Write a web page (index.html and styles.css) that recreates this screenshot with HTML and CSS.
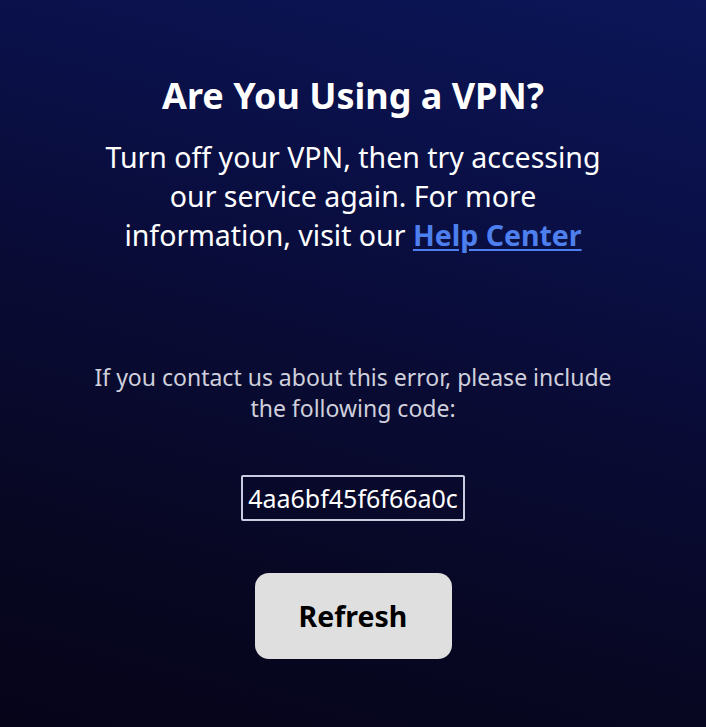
FILE: index.html
```html
<!DOCTYPE html>
<html lang="en">
<head>
<meta charset="utf-8">
<title>Are You Using a VPN?</title>
<link rel="stylesheet" href="styles.css">
</head>
<body>
<main class="page">
  <section class="notice">
    <h1 class="title">Are You Using a VPN?</h1>
    <p class="lead">Turn off your VPN, then try accessing our service again. For more information, visit our <a class="help" href="#">Help Center</a></p>
  </section>
  <section class="error">
    <p class="hint">If you contact us about this error, please include the following code:</p>
    <div class="code">4aa6bf45f6f66a0c</div>
    <button class="refresh" type="button">Refresh</button>
  </section>
</main>
</body>
</html>
```
FILE: styles.css
```css
html, body {
  margin: 0;
  padding: 0;
  height: 100%;
}
body {
  font-family: "Noto Sans", "Open Sans", sans-serif;
  color: #ffffff;
  background: linear-gradient(195deg, #0c1658 0%, #0a1048 25%, #090b34 50%, #070722 78%, #060419 100%);
  background-color: #060419;
}
.page {
  display: flex;
  flex-direction: column;
  align-items: center;
  padding-top: 71px;
  text-align: center;
}
.notice {
  width: 520px;
  display: flex;
  flex-direction: column;
  align-items: center;
}
.title {
  margin: 0;
  font-size: 36px;
  font-weight: 700;
  line-height: 50px;
}
.lead {
  margin: 17px 0 0;
  font-size: 28.5px;
  line-height: 39px;
}
.help {
  color: #4d7fee;
  font-weight: 700;
  text-decoration: underline;
  text-underline-offset: 3px;
}
.error {
  display: flex;
  flex-direction: column;
  align-items: center;
  margin-top: 107px;
}
.hint {
  width: 540px;
  margin: 0;
  font-size: 23px;
  line-height: 31px;
  color: #cfd0dc;
}
.code {
  margin-top: 51px;
  border: 2px solid #c9cbe0;
  border-radius: 2px;
  padding: 3px 5px;
  font-size: 25px;
  line-height: 36px;
  color: #ffffff;
}
.refresh {
  margin-top: 52px;
  width: 197px;
  height: 86px;
  border: none;
  border-radius: 14px;
  background: #dfdfdf;
  color: #000000;
  font-family: "Noto Sans", "Open Sans", sans-serif;
  font-size: 28.5px;
  font-weight: 700;
}
```
